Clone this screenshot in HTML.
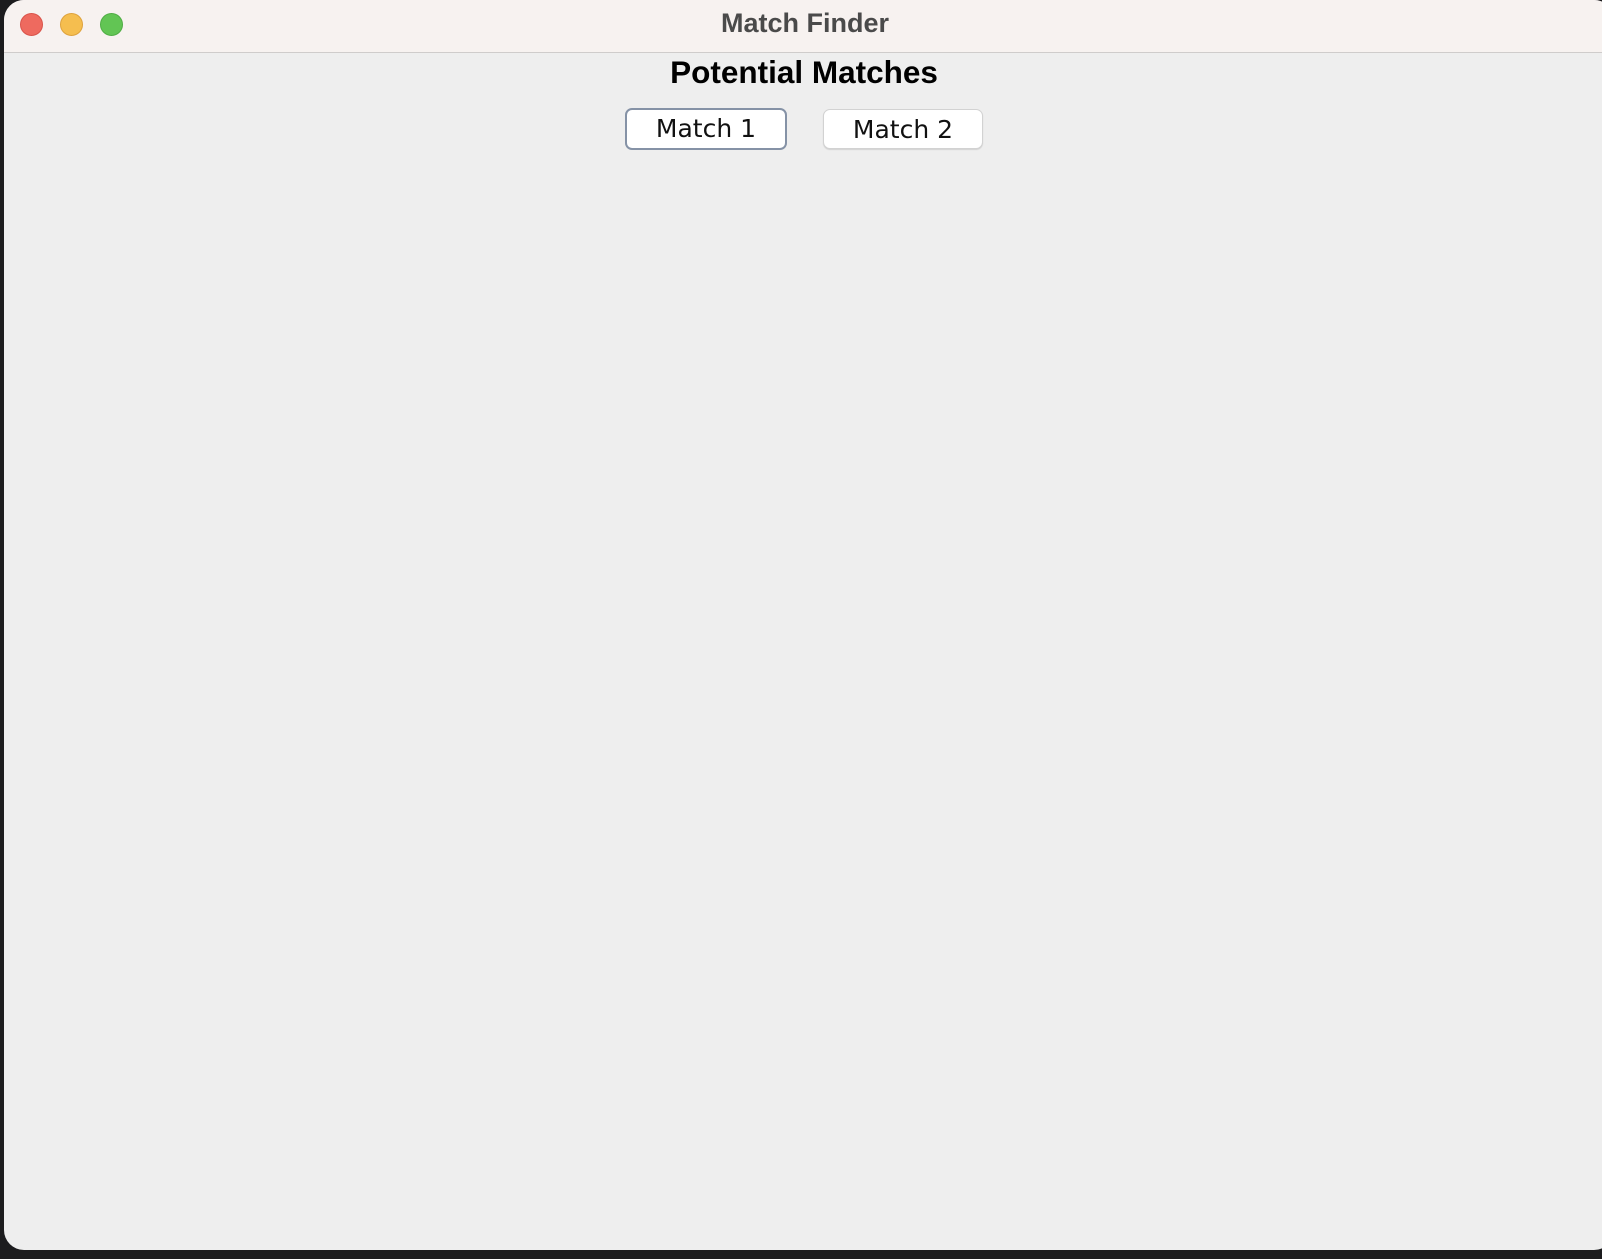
<!DOCTYPE html>
<html><head><style>
html,body{margin:0;padding:0;width:1602px;height:1259px;overflow:hidden;background:#1c1c1e;font-family:"Liberation Sans",sans-serif}
.win{position:absolute;left:4px;top:0;width:1610px;height:1250px;background:#eeeeee;border-radius:20px;overflow:hidden}
.tb{position:absolute;left:0;top:0;right:0;height:52px;background:#f7f2f0;border-bottom:1px solid #cfcccb}
.dot{position:absolute;top:13px;width:23px;height:23px;border-radius:50%;box-sizing:border-box}
.title{position:absolute;width:1602px;top:8px;text-align:center;font-weight:bold;font-size:27px;color:#4a4a4a}
h1{position:absolute;width:1602px;top:54px;margin:0;text-align:center;font-size:31.5px;font-weight:bold;color:#000}
.btn{position:absolute;box-sizing:border-box;background:#fff;border-radius:7px;text-align:center;font-size:25px;color:#111;font-family:"DejaVu Sans","Liberation Sans",sans-serif;line-height:39px}
</style></head><body>
<div class="win">
<div class="tb">
<div class="dot" style="left:16px;background:#ee6a5f;border:1px solid #d9534a"></div>
<div class="dot" style="left:56px;background:#f5be4f;border:1px solid #dea23c"></div>
<div class="dot" style="left:96px;background:#62c554;border:1px solid #4fad44"></div>
<div class="title" style="left:0px">Match Finder</div>
</div>
<h1 style="left:-1px">Potential Matches</h1>
<div class="btn" style="left:621px;top:108px;width:162px;height:42px;border:2px solid #8592a6;line-height:38px">Match 1</div>
<div class="btn" style="left:819px;top:109px;width:160px;height:40px;border:1px solid #d2d2d2;box-shadow:0 1px 1px rgba(0,0,0,.12)">Match 2</div>
</div>
</body></html>
